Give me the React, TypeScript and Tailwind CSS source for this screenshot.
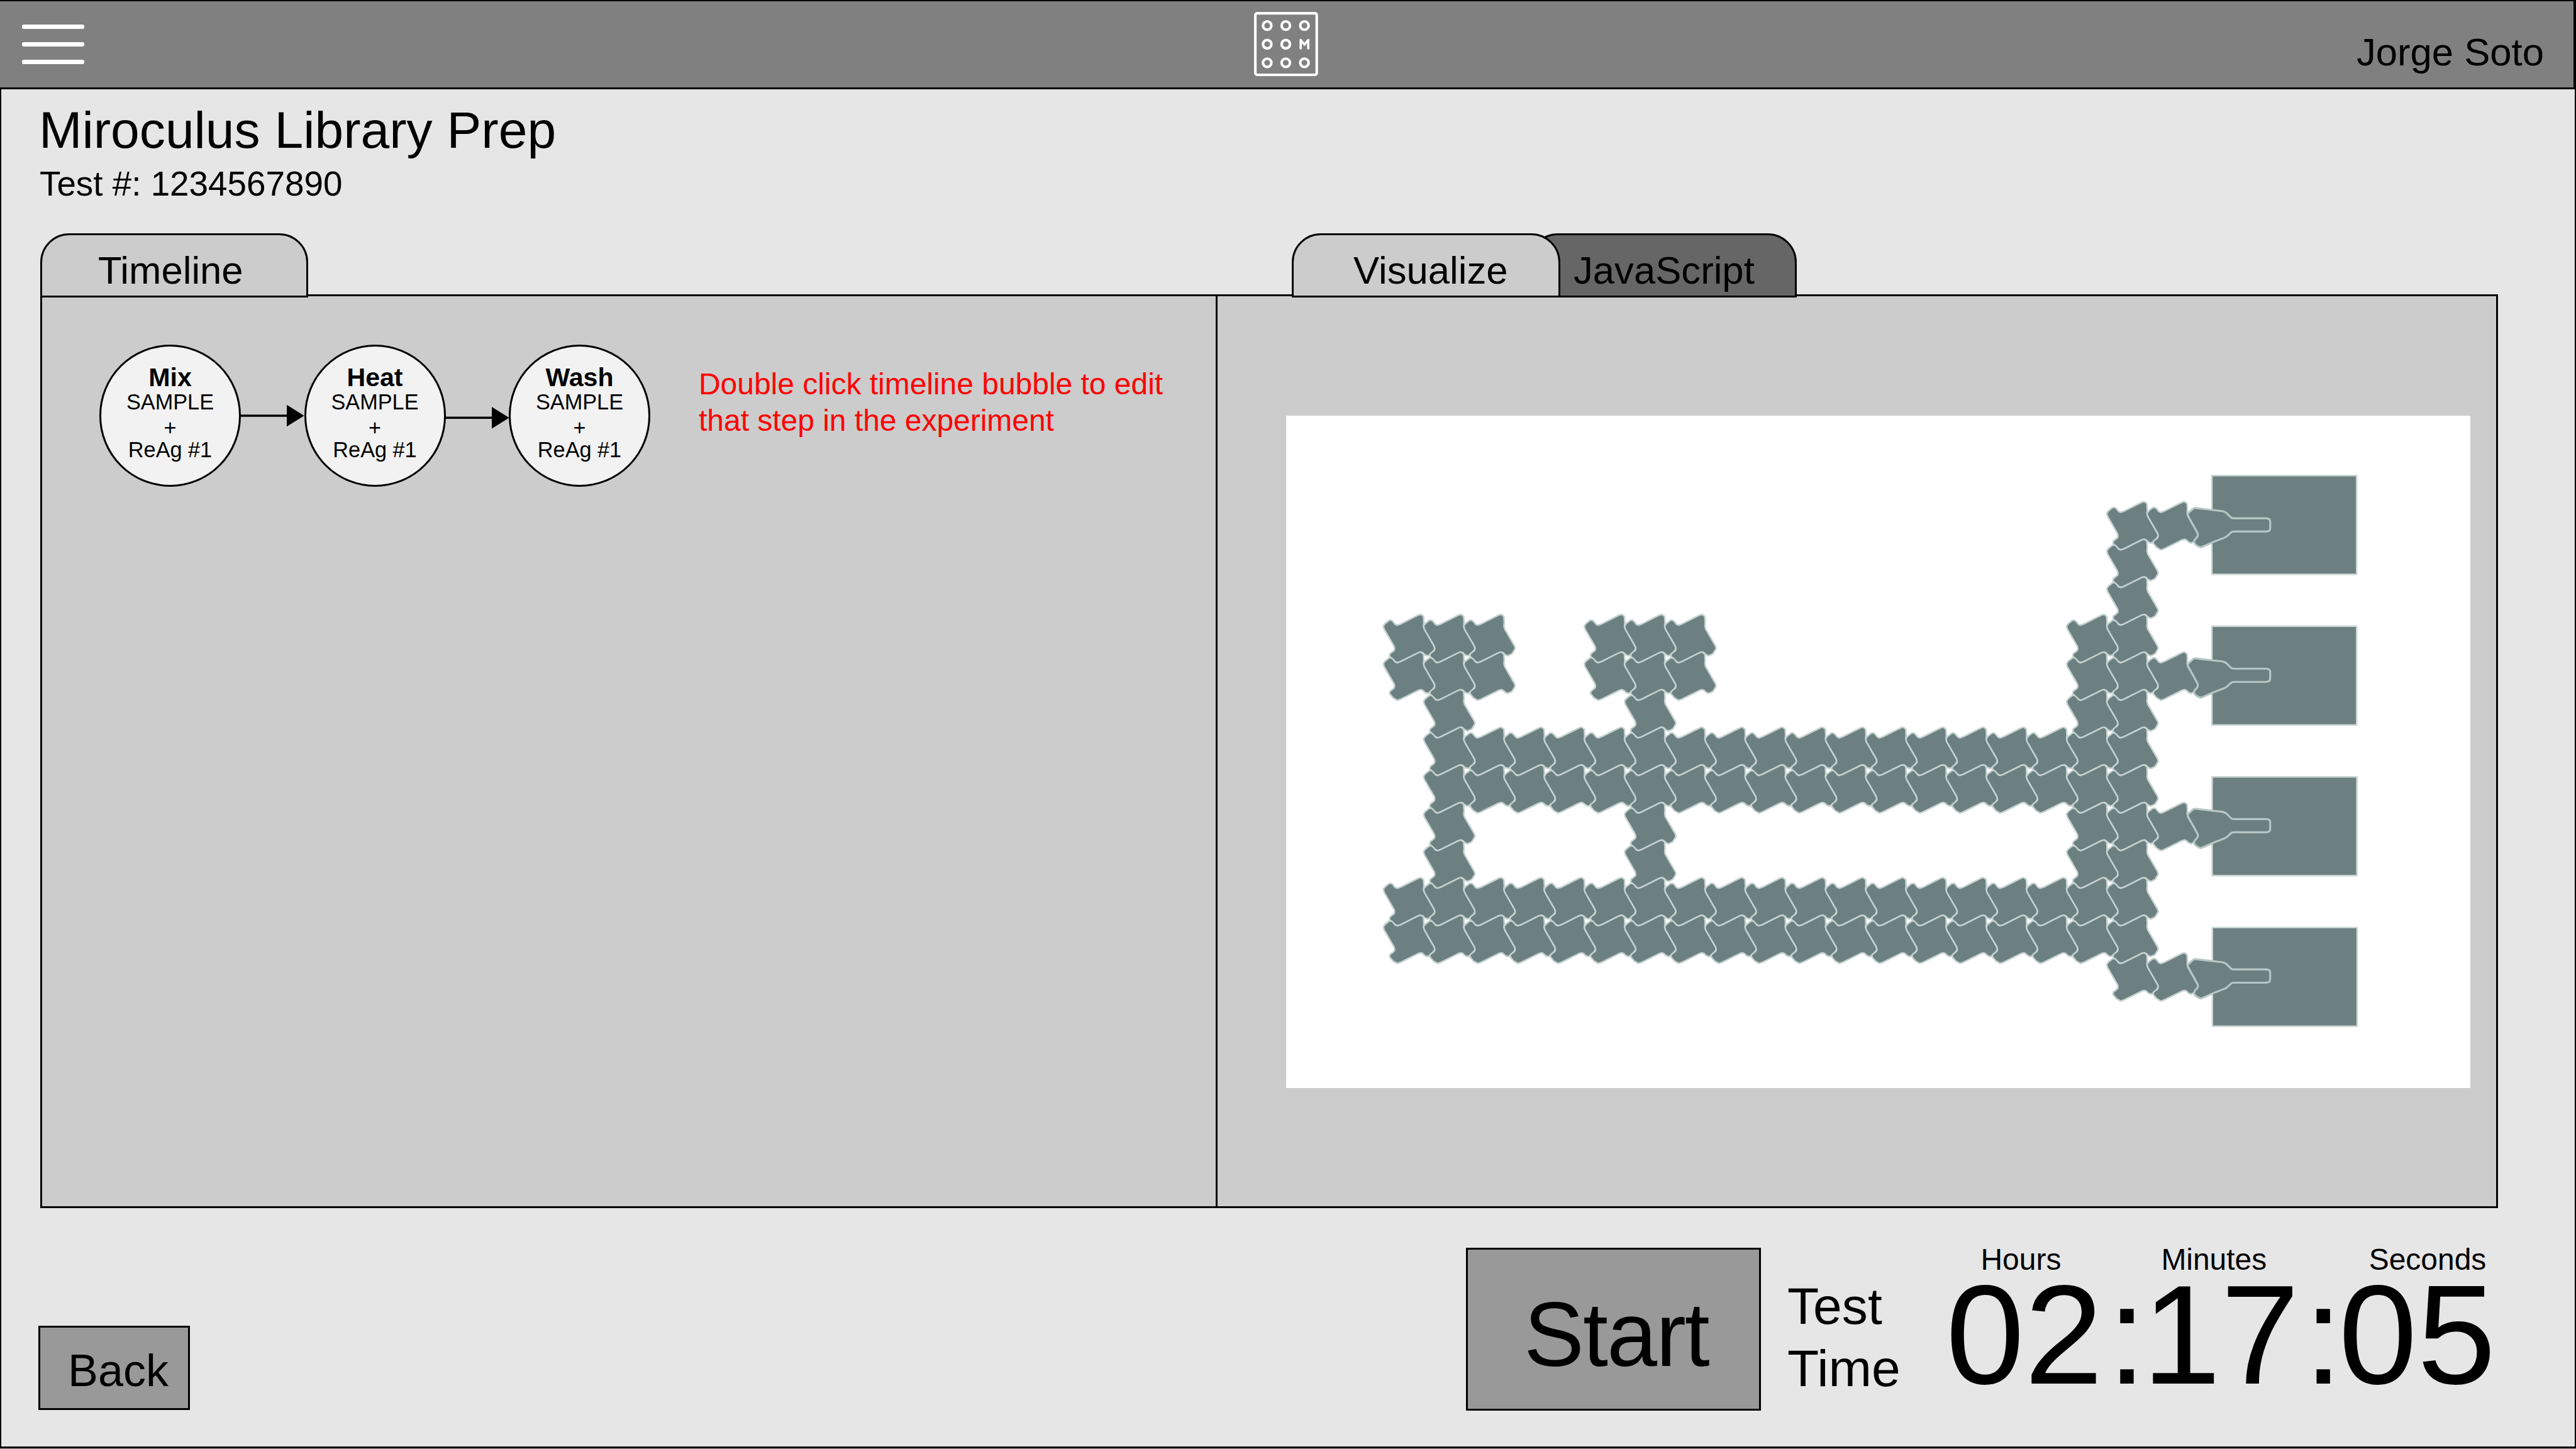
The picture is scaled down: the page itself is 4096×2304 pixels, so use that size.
import React from "react";

const COL = 77.75;
const ROW = 72.75;
const ORIGIN_X = 190;
const ORIGIN_Y = 167;

const CELL =
  "M-1.8 21.7 L1.5 17 L9.5 10.6 L14 10.6 L18 14.5 L21 18.5 L25 20 L31 18 L66.6 .2 L71 -.6 L75.8 3.2 L76.5 15 L75.9 21.7 L77.2 27.4 L96.6 60.9 L97.6 65.5 L91.5 75.5 L83.2 79.5 L78 77 L74.5 73.5 L71 72.2 L66.6 73 L31 90.7 L25 92.7 L17 88 L10.2 80 L10.8 75.5 L19 69 L19.9 65.5 L18.9 60.9 L-0.5 27.4Z";

const NOZZLE =
  "M1.7 20 L9 13.4 Q11.5 11.2 15 11.6 L66 17.6 Q72 18.4 75.5 22.3 L82 29 Q84.5 31.5 88 31.5 H151 Q158.8 31.5 158.8 38 V50.5 Q158.8 57.1 151 57.1 H88 Q85 57.1 82.5 59.4 L76 65.4 Q73.5 67.8 70 69.2 L48.6 77.4 L27.5 86.8 Q24.5 88 21 86.6 Q10.5 81.5 11.6 76 Q12 73.5 16 69.6 Q20.5 65.4 18.2 60 L-0.2 26.5 Q-1.4 23 1.7 20 Z";

const range = (from: number, to: number) =>
  Array.from({ length: to - from + 1 }, (_, i) => from + i);

const ROW_COLUMNS: number[][] = [
  [18, 19],
  [18],
  [18],
  [0, 1, 2, 5, 6, 7, 17, 18],
  [0, 1, 2, 5, 6, 7, 17, 18, 19],
  [1, 6, 17, 18],
  range(1, 18),
  range(1, 18),
  [1, 6, 17, 18, 19],
  [1, 6, 17, 18],
  range(0, 18),
  range(0, 18),
  [18, 19],
];

const CELLS = ROW_COLUMNS.flatMap((cols, row) => cols.map((col) => ({ row, col })));

const RESERVOIRS = [
  { row: 0, x: 1791, y: 116 },
  { row: 4, x: 1791, y: 407.5 },
  { row: 8, x: 1791.5, y: 699 },
  { row: 12, x: 1792, y: 990.5 },
];

const place = (col: number, row: number) =>
  `translate(${ORIGIN_X + col * COL} ${ORIGIN_Y + row * ROW})`;

function ElectrodeMap() {
  return (
    <svg viewBox="0 0 2291 1301" className="block h-full w-full" preserveAspectRatio="none" strokeLinejoin="round" fill="#6c8081">
      {RESERVOIRS.map((r) => (
        <rect key={r.row} x={r.x} y={r.y} width={280} height={191} stroke="#c9d5d3" strokeWidth={3} />
      ))}
      <g stroke="#c5d2d0" strokeWidth={3}>
        {CELLS.map(({ row, col }) => (
          <path key={`${row}-${col}`} d={CELL} transform={place(col, row)} />
        ))}
      </g>
      <g stroke="#b7c7c5" strokeWidth={3.8}>
        {RESERVOIRS.map((r) => (
          <path key={r.row} d={NOZZLE} transform={place(20, r.row)} />
        ))}
      </g>
    </svg>
  );
}

function Logo() {
  const dots = [
    [25.4, 26.3], [61.4, 26.3], [97.4, 26.3],
    [25.4, 62.3], [61.4, 62.3],
    [25.4, 98.3], [61.4, 98.3], [97.4, 98.3],
  ];
  return (
    <svg viewBox="0 0 124 124" className="ml-[1860px] mt-[17px] h-[102px] w-[102px] shrink-0" fill="none" stroke="#fff" strokeWidth={5}>
      <rect x={2.5} y={2.6} width={118.7} height={118.9} rx={3.5} />
      {dots.map(([x, y]) => (
        <circle key={`${x}-${y}`} cx={x} cy={y} r={8.1} />
      ))}
      <path d="M90.2 70.5V54.2L97.4 63.2L104.8 54.2V70.5" strokeWidth={4.4} strokeLinecap="round" strokeLinejoin="round" />
    </svg>
  );
}

function Step({ title }: { title: string }) {
  return (
    <div className="flex h-[226px] w-[225px] shrink-0 flex-col items-center rounded-full border-[3px] border-black bg-[#f2f2f2] pt-[29px] text-[34.25px] leading-[37.8px]">
      <div className="text-[41.1px] font-bold leading-none">{title}</div>
      <div>SAMPLE</div>
      <div className="relative top-[3px]">+</div>
      <div>ReAg #1</div>
    </div>
  );
}

function Arrow({ y }: { y: number }) {
  return (
    <svg viewBox="0 0 100.5 226" className="h-[226px] w-[100.5px] shrink-0 overflow-visible">
      <path d={`M-1 ${y}H75`} stroke="#000" strokeWidth={3.4} />
      <path d={`M73 ${y - 17.3}V${y + 17.3}L100.6 ${y}Z`} />
    </svg>
  );
}

export default function App() {
  return (
    <div className="h-[2304px] w-[4096px] overflow-hidden bg-[#b0b0b0] font-['Liberation_Sans',Arial,sans-serif] text-black">
      <header className="flex h-[142px] items-start border-t-2 border-r-4 border-b-[3px] border-black bg-[#808080]">
        <div className="ml-[35px] mt-[37px] flex w-[99px] flex-col gap-[21px]">
          <div className="h-[7px] rounded-[3px] bg-white" />
          <div className="h-[7px] rounded-[3px] bg-white" />
          <div className="h-[7px] rounded-[3px] bg-white" />
        </div>
        <Logo />
        <div className="ml-auto mr-[47px] mt-[50px] text-[61.65px] leading-none">Jorge Soto</div>
      </header>

      <main className="flex h-[2161px] flex-col border-x-2 border-b-[3px] border-black bg-[#e6e6e6]">
        <div className="h-[229px] shrink-0 pt-[24px]">
          <h1 className="ml-[60px] text-[82.2px] leading-none">Miroculus Library Prep</h1>
          <p className="ml-[61px] mt-[17px] text-[54.8px] leading-none">Test #: 1234567890</p>
        </div>

        <div className="relative z-10 flex h-[102px] shrink-0 text-[61.65px] leading-none">
          <div className="ml-[62px] w-[426px] rounded-t-[46px] border-[3px] border-black bg-[#ccc] pl-[89px] pt-[25px]">Timeline</div>
          <div className="relative z-10 ml-[1564px] w-[427px] rounded-t-[46px] border-[3px] border-black bg-[#ccc] pl-[95px] pt-[25px]">Visualize</div>
          <div className="ml-[-50px] w-[426px] rounded-t-[46px] border-[3px] border-black bg-[#666] pl-[68px] pt-[25px]">JavaScript</div>
        </div>

        <section className="ml-[62px] mt-[-5px] flex h-[1453px] w-[3908px] shrink-0 border-[3px] border-black bg-[#ccc]">
          <div className="flex w-[1869px] shrink-0 items-start border-r-[3px] border-black pl-[91px] pt-[77px]">
            <Step title="Mix" />
            <Arrow y={113} />
            <Step title="Heat" />
            <Arrow y={116.3} />
            <Step title="Wash" />
            <p className="ml-[77px] mt-[34px] whitespace-nowrap text-[47.95px] leading-[57.5px] text-[#ff0000]">
              Double click timeline bubble to edit
              <br />
              that step in the experiment
            </p>
          </div>
          <div className="ml-[109px] mt-[190px] h-[1069px] w-[1883px] shrink-0 bg-white">
            <ElectrodeMap />
          </div>
        </section>

        <footer className="flex items-start">
          <button className="ml-[59px] mt-[187px] flex h-[134px] w-[241px] shrink-0 border-[3px] border-black bg-[#999] pl-[44px] pt-[33px] text-[71.9px] leading-none">
            Back
          </button>
          <button className="ml-[2029px] mt-[63px] flex h-[259px] w-[469px] shrink-0 border-[3px] border-black bg-[#999] pl-[89px] pt-[64px] text-[143.85px] leading-none tracking-[-2px]">
            Start
          </button>
          <div className="ml-[42px] mt-[107px] w-[182px] shrink-0 text-[82.2px] leading-[98.6px]">
            Test
            <br />
            Time
          </div>
          <div className="ml-[70px] mt-[58px] shrink-0">
            <div className="ml-[55.5px] flex text-[47.95px] leading-none">
              <span>Hours</span>
              <span className="ml-[159px]">Minutes</span>
              <span className="ml-[162.5px]">Seconds</span>
            </div>
            <div className="mt-[12px] text-[224.6px] leading-[168px]">
              02<span className="relative left-[7px]">:</span>17<span className="relative left-[7px]">:</span>05
            </div>
          </div>
        </footer>
      </main>
    </div>
  );
}
